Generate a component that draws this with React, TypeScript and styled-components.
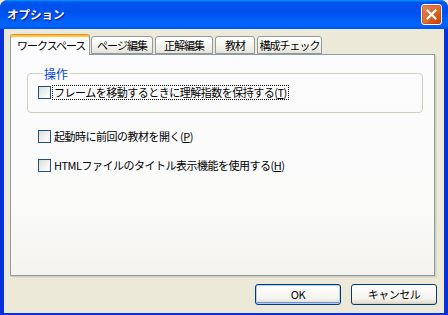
import React from "react";
import styled, { createGlobalStyle } from "styled-components";

const Global = createGlobalStyle`
  html, body {
    margin: 0;
    padding: 0;
    width: 448px;
    height: 315px;
    overflow: hidden;
    background: #ece9d8;
  }
  * {
    box-sizing: border-box;
  }
`;

const font = `"Noto Sans CJK JP", "DejaVu Sans", sans-serif`;

const Window = styled.div`
  width: 448px;
  height: 315px;
  display: flex;
  flex-flow: column;
  background: #0831d9;
  border-radius: 8px 8px 0 0;
  overflow: hidden;
  font-family: ${font};
  font-size: 11px;
  letter-spacing: -0.5px;
  color: #000;
`;

const TitleBar = styled.div`
  height: 29px;
  flex: none;
  display: flex;
  align-items: center;
  justify-content: space-between;
  padding: 0 6px 1px 7px;
  background: linear-gradient(
    180deg,
    #0997ff 0%,
    #0053ee 8%,
    #0050ee 40%,
    #0066ff 88%,
    #0050e8 100%
  );
`;

const Title = styled.span`
  color: #fff;
  font-weight: bold;
  font-size: 11.5px;
  letter-spacing: 0;
  text-shadow: 1px 1px #0f1089;
`;

const CloseButton = styled.div`
  width: 21px;
  height: 21px;
  margin-top: 1px;
  border: 1px solid #fff;
  border-radius: 3px;
  background: radial-gradient(
    circle at 85% 85%,
    #cc4600 0%,
    #dc6527 45%,
    #e58b62 100%
  );
  box-shadow: inset 0 0 0 1px rgba(180, 40, 0, 0.35);
  display: flex;
  align-items: center;
  justify-content: center;
`;

const Body = styled.div`
  flex: 1;
  margin: 0 4px 2px 4px;
  background: #ece9d8;
  display: flex;
  flex-flow: column;
  padding: 5px 8px 0 6px;
`;

const TabRow = styled.div`
  display: flex;
  align-items: flex-end;
  height: 20px;
  position: relative;
  z-index: 1;
`;

const Tab = styled.div<{ $active?: boolean; $w: number }>`
  width: ${(p) => p.$w}px;
  height: ${(p) => (p.$active ? "21px" : "18px")};
  margin-bottom: ${(p) => (p.$active ? "-1px" : "0")};
  margin-right: ${(p) => (p.$active ? "1px" : "2px")};
  padding: ${(p) => (p.$active ? "3px 0 0 6px" : "1px 0 0 0")};
  text-align: ${(p) => (p.$active ? "left" : "center")};
  letter-spacing: -1px;
  border: 1px solid #919b9c;
  border-bottom: ${(p) => (p.$active ? "none" : "1px solid #919b9c")};
  border-radius: 3px 3px 0 0;
  background: ${(p) =>
    p.$active
      ? "#fcfcfe"
      : "linear-gradient(180deg, #ffffff 0%, #f3f3ef 60%, #e3e2da 100%)"};
  box-shadow: ${(p) => (p.$active ? "inset 0 2px 0 #ffc83c" : "none")};
  border-top-color: ${(p) => (p.$active ? "#e68b2c" : "#919b9c")};
  white-space: nowrap;
  line-height: 15px;
`;

const Panel = styled.div`
  width: 425px;
  height: 222px;
  border: 1px solid #919b9c;
  box-shadow: 1px 1px 0 #d0cec3, 2px 2px 0 #dedcd1;
  background: linear-gradient(180deg, #fcfcfe 0%, #fafaf9 70%, #f4f3ee 100%);
  padding: 12px 13px 0 16px;
  display: flex;
  flex-flow: column;
`;

const GroupBox = styled.fieldset`
  margin: 0;
  width: 396px;
  height: 46px;
  border: 1px solid #d0d0bf;
  border-radius: 4px;
  padding: 5px 0 0 10px;
`;

const Legend = styled.legend`
  color: #0046d5;
  padding: 0 2px 0 1px;
  margin-left: 5px;
  line-height: 13px;
  font-size: 12px;
  letter-spacing: 0;
`;

const Row = styled.div<{ $top?: number }>`
  display: flex;
  align-items: center;
  margin-top: ${(p) => p.$top ?? 0}px;
  margin-left: ${(p) => (p.$top ? "11px" : "0")};
  height: 15px;
  white-space: nowrap;
`;

const Box = styled.span`
  width: 13px;
  height: 13px;
  flex: none;
  border: 1px solid #1c5180;
  background: linear-gradient(135deg, #dcdcd7 0%, #f4f4f0 60%, #ffffff 100%);
  margin-right: 2px;
`;

const Label = styled.span<{ $focus?: boolean }>`
  line-height: 13px;
  padding: 0 1px;
  outline: ${(p) => (p.$focus ? "1px dotted #000" : "none")};
  outline-offset: 0;
`;

const Key = styled.span`
  text-decoration: underline;
`;

const Footer = styled.div`
  display: flex;
  justify-content: flex-end;
  gap: 10px;
  padding-top: 8px;
  margin-right: -1px;
`;

const Button = styled.div<{ $default?: boolean }>`
  width: 86px;
  height: 21px;
  border: 1px solid #003c74;
  border-radius: 3px;
  background: linear-gradient(180deg, #ffffff 0%, #f5f4ef 70%, #dcd9cc 100%);
  box-shadow: ${(p) =>
    p.$default
      ? "inset 0 0 0 1px #b6cdf6, inset 0 -1px 0 1px #6e90e0"
      : "inset 0 -1px 0 #d6d0c0"};
  display: flex;
  align-items: center;
  justify-content: center;
  line-height: 13px;
`;

const tabs = [
  { label: "ワークスペース", w: 80 },
  { label: "ページ編集", w: 62 },
  { label: "正解編集", w: 58 },
  { label: "教材", w: 40 },
  { label: "構成チェック", w: 65 },
];

const items = [
  { text: "起動時に前回の教材を開く", key: "P", top: 16 },
  { text: "HTMLファイルのタイトル表示機能を使用する", key: "H", top: 14 },
];

const App = () => {
  return (
    <>
      <Global />
      <Window>
        <TitleBar>
          <Title>オプション</Title>
          <CloseButton>
            <svg width="11" height="11" viewBox="0 0 11 11">
              <path
                d="M1.5 1.5 L9.5 9.5 M9.5 1.5 L1.5 9.5"
                stroke="#fff"
                strokeWidth="2.2"
                strokeLinecap="square"
              />
            </svg>
          </CloseButton>
        </TitleBar>
        <Body>
          <TabRow>
            {tabs.map((t, i) => (
              <Tab key={t.label} $active={i === 0} $w={t.w}>
                {t.label}
              </Tab>
            ))}
          </TabRow>
          <Panel>
            <GroupBox>
              <Legend>操作</Legend>
              <Row>
                <Box />
                <Label $focus>
                  フレームを移動するときに理解指数を保持する(<Key>T</Key>)
                </Label>
              </Row>
            </GroupBox>
            {items.map((it) => (
              <Row key={it.key} $top={it.top}>
                <Box />
                <Label>
                  {it.text}(<Key>{it.key}</Key>)
                </Label>
              </Row>
            ))}
          </Panel>
          <Footer>
            <Button $default>OK</Button>
            <Button>キャンセル</Button>
          </Footer>
        </Body>
      </Window>
    </>
  );
};

export default App;
